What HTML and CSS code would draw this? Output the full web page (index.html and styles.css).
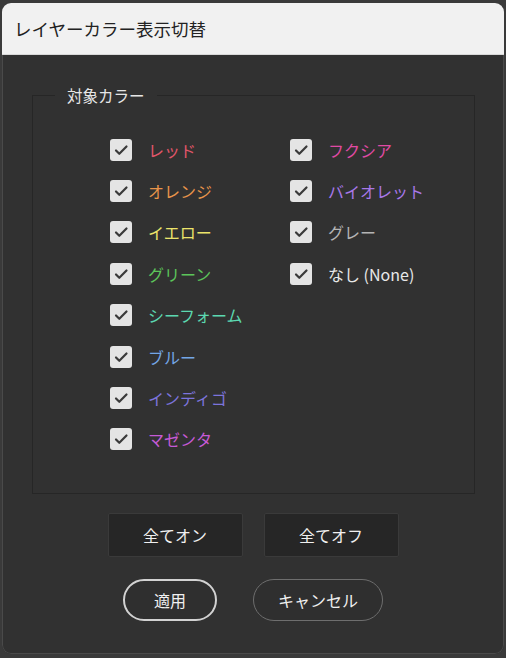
FILE: index.html
```html
<!DOCTYPE html>
<html lang="ja">
<head>
<meta charset="utf-8">
<title>レイヤーカラー表示切替</title>
<link rel="stylesheet" href="styles.css">
</head>
<body>
<div class="window">
  <div class="titlebar">レイヤーカラー表示切替</div>
  <div class="content">
    <fieldset class="group">
      <legend class="legend">対象カラー</legend>
      <div class="grid">
        <div class="col">
          <label class="item"><span class="box"><svg viewBox="0 0 22 22"><path d="M6 11.5l3.3 3.3L16.5 7.5"/></svg></span><span class="lbl c-red">レッド</span></label>
          <label class="item"><span class="box"><svg viewBox="0 0 22 22"><path d="M6 11.5l3.3 3.3L16.5 7.5"/></svg></span><span class="lbl c-orange">オレンジ</span></label>
          <label class="item"><span class="box"><svg viewBox="0 0 22 22"><path d="M6 11.5l3.3 3.3L16.5 7.5"/></svg></span><span class="lbl c-yellow">イエロー</span></label>
          <label class="item"><span class="box"><svg viewBox="0 0 22 22"><path d="M6 11.5l3.3 3.3L16.5 7.5"/></svg></span><span class="lbl c-green">グリーン</span></label>
          <label class="item"><span class="box"><svg viewBox="0 0 22 22"><path d="M6 11.5l3.3 3.3L16.5 7.5"/></svg></span><span class="lbl c-sea">シーフォーム</span></label>
          <label class="item"><span class="box"><svg viewBox="0 0 22 22"><path d="M6 11.5l3.3 3.3L16.5 7.5"/></svg></span><span class="lbl c-blue">ブルー</span></label>
          <label class="item"><span class="box"><svg viewBox="0 0 22 22"><path d="M6 11.5l3.3 3.3L16.5 7.5"/></svg></span><span class="lbl c-indigo">インディゴ</span></label>
          <label class="item"><span class="box"><svg viewBox="0 0 22 22"><path d="M6 11.5l3.3 3.3L16.5 7.5"/></svg></span><span class="lbl c-magenta">マゼンタ</span></label>
        </div>
        <div class="col">
          <label class="item"><span class="box"><svg viewBox="0 0 22 22"><path d="M6 11.5l3.3 3.3L16.5 7.5"/></svg></span><span class="lbl c-fuchsia">フクシア</span></label>
          <label class="item"><span class="box"><svg viewBox="0 0 22 22"><path d="M6 11.5l3.3 3.3L16.5 7.5"/></svg></span><span class="lbl c-violet">バイオレット</span></label>
          <label class="item"><span class="box"><svg viewBox="0 0 22 22"><path d="M6 11.5l3.3 3.3L16.5 7.5"/></svg></span><span class="lbl c-gray">グレー</span></label>
          <label class="item"><span class="box"><svg viewBox="0 0 22 22"><path d="M6 11.5l3.3 3.3L16.5 7.5"/></svg></span><span class="lbl c-none">なし (None)</span></label>
        </div>
      </div>
    </fieldset>
    <div class="row-buttons">
      <button class="btn-flat">全てオン</button>
      <button class="btn-flat">全てオフ</button>
    </div>
    <div class="row-actions">
      <button class="btn-pill btn-primary">適用</button>
      <button class="btn-pill btn-cancel">キャンセル</button>
    </div>
  </div>
</div>
</body>
</html>
```
FILE: styles.css
```css
html, body {
  margin: 0;
  padding: 0;
}
body {
  background: #3a3a3a;
  width: 506px;
  height: 658px;
  overflow: hidden;
  font-family: "Noto Sans CJK JP", "Noto Sans", sans-serif;
}
.window {
  margin: 3px 2px 0 2px;
  width: 502px;
  height: 651px;
  display: flex;
  flex-direction: column;
  border-radius: 9px;
  overflow: hidden;
  background: #313131;
}
.titlebar {
  height: 52px;
  flex: none;
  background: #f1f1f1;
  color: #222;
  font-size: 17.5px;
  line-height: 52px;
  padding-left: 12px;
  border-bottom: 1px solid #d8d8d8;
  box-sizing: border-box;
}
.content {
  flex: 1;
  display: flex;
  flex-direction: column;
  align-items: center;
  border: 1px solid #4a4a4a;
  border-top: none;
  border-radius: 0 0 9px 9px;
  background: #313131;
}
.group {
  margin: 30px 0 0 29px;
  align-self: flex-start;
  width: 443px;
  height: 409px;
  box-sizing: border-box;
  border: 1px solid #262626;
  padding: 24px 0 0 0;
  min-width: 0;
}
.legend {
  color: #e6e6e6;
  font-size: 15.5px;
  padding: 0 12px;
  margin-left: 22px;
  line-height: 20px;
}
.grid {
  display: grid;
  grid-template-columns: 180px auto;
  padding-left: 77px;
}
.col {
  display: flex;
  flex-direction: column;
}
.item {
  height: 41.4px;
  display: flex;
  align-items: center;
  gap: 16px;
}
.box {
  width: 22px;
  height: 22px;
  flex: none;
  background: #e4e4e4;
  border-radius: 3px;
  display: flex;
}
.box svg {
  width: 22px;
  height: 22px;
}
.box path {
  fill: none;
  stroke: #3a3a3a;
  stroke-width: 2.2;
  stroke-linecap: round;
  stroke-linejoin: round;
}
.lbl {
  font-size: 16px;
  line-height: 20px;
  white-space: nowrap;
}
.c-red { color: #e2566a; }
.c-orange { color: #e8944a; }
.c-yellow { color: #ece46a; }
.c-green { color: #5cc45a; }
.c-sea { color: #5cd8b0; }
.c-blue { color: #74a6e6; }
.c-indigo { color: #7c74dc; }
.c-magenta { color: #c65ad6; }
.c-fuchsia { color: #e04aa4; }
.c-violet { color: #a878e8; }
.c-gray { color: #b4b4b4; }
.c-none { color: #e8e8e8; }
.row-buttons {
  margin-top: 19px;
  display: flex;
  gap: 21px;
}
.btn-flat {
  width: 135px;
  height: 44px;
  background: #262626;
  border: 1px solid #3a3a3a;
  border-radius: 2px;
  color: #f0f0f0;
  font-family: inherit;
  font-size: 16px;
  padding: 0;
}
.row-actions {
  margin-top: 22px;
  display: flex;
  gap: 36px;
}
.btn-pill {
  height: 42px;
  border-radius: 21px;
  background: #2f2f2f;
  color: #f0f0f0;
  font-family: inherit;
  font-size: 16px;
  padding: 0;
}
.btn-primary {
  width: 94px;
  border: 2px solid #d2d2d2;
}
.btn-cancel {
  width: 130px;
  border: 1px solid #6e6e6e;
}
```
